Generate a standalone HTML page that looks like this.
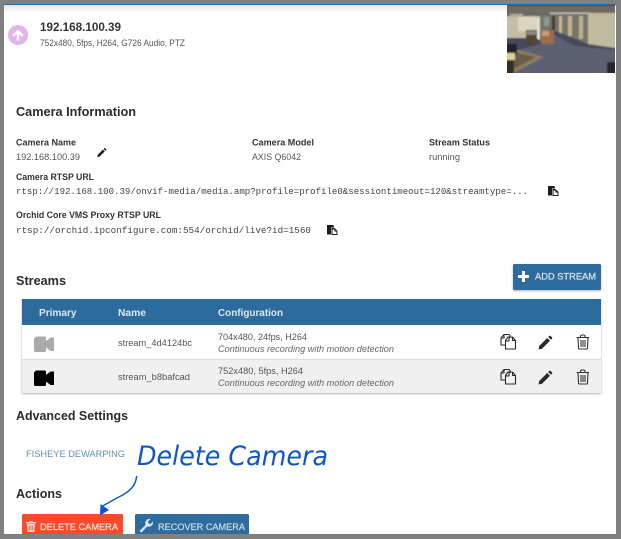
<!DOCTYPE html>
<html><head><meta charset="utf-8"><style>
html,body{margin:0;padding:0;background:#808080;width:621px;height:539px;overflow:hidden}
svg{display:block;position:absolute;left:0;top:0;filter:blur(.3px)}
text{font-family:"Liberation Sans",sans-serif;fill:#555;font-size:8.8px}
.b{font-weight:700;fill:#333}
.h{font-weight:700;fill:#2b2b2b;font-size:12.5px}
.m{font-family:"Liberation Mono",monospace;font-size:8.8px;fill:#444}
.w{fill:#fff;font-size:9.2px;stroke-width:.25px}
.i{font-style:italic;fill:#666}
</style></head><body>
<svg width="621" height="539" viewBox="0 0 621 539" xmlns="http://www.w3.org/2000/svg">
<defs>
<linearGradient id="tg" x1="0" y1="0" x2="0" y2="1"><stop offset="0" stop-color="#e4e4e4"/><stop offset="1" stop-color="#fff"/></linearGradient>
<filter id="bl" x="-5%" y="-5%" width="110%" height="110%"><feGaussianBlur stdDeviation="0.9"/></filter>
<filter id="s" x="-2%" y="-5%" width="104%" height="115%"><feDropShadow dx="0" dy="1" stdDeviation="1" flood-color="#000" flood-opacity=".3"/></filter>
<clipPath id="th"><rect x="507" y="5" width="108" height="68"/></clipPath>
</defs>
<rect x="0" y="0" width="621" height="539" fill="#fff"/>
<rect x="4" y="5" width="612" height="8" fill="url(#tg)"/>

<circle cx="18" cy="35" r="10" fill="#e2b6ec"/>
<path d="M18 29.500l-5.600 5.600 1.600 1.600 2.800-2.800v6.600h2.400v-6.600l2.800 2.800 1.600-1.600z" fill="#fff"/>
<text x="40" y="31" class="b" style="font-size:12px" textLength="81" lengthAdjust="spacingAndGlyphs">192.168.100.39</text>
<text x="40" y="46" textLength="145" lengthAdjust="spacingAndGlyphs">752x480, 5fps, H264, G726 Audio, PTZ</text>

<g clip-path="url(#th)"><g filter="url(#bl)">
<rect x="505" y="3" width="112" height="72" fill="#5d6172"/>
<rect x="505" y="3" width="112" height="11" fill="#6f6a5e"/>
<rect x="505" y="3" width="112" height="3" fill="#4c4a44"/>
<rect x="510" y="14" width="13" height="1.500" fill="#bdb8a6"/>
<rect x="550" y="12.500" width="40" height="1.500" fill="#c8c4b4"/>
<path d="M505 16H540V44H505z" fill="#c4bea6"/>
<rect x="518" y="17" width="18" height="14" fill="#dcd6bf"/>
<rect x="536.500" y="18" width="3" height="26" fill="#e6e4da"/>
<path d="M540 15H589V45L570 38 555 32 540 32z" fill="#767468"/>
<rect x="544" y="17" width="5" height="9" fill="#8d9a98"/>
<rect x="552" y="16" width="3" height="14" fill="#39393a"/>
<rect x="559" y="16" width="3" height="17" fill="#c4b999"/>
<rect x="568" y="16" width="4" height="20" fill="#c2b48e"/>
<rect x="579" y="16" width="4" height="23" fill="#bdb18f"/>
<path d="M588 13H617V48L588 45z" fill="#c2ba9f"/>
<path d="M547 28 566 35 588 44 615 48V50L575 46 556 36z" fill="#474a5c"/>
<path d="M505 38H536L545 43 518 50 505 50z" fill="#45485a"/>
<path d="M505 50H520L544 57 513 73H505z" fill="#8d7e60"/>
<path d="M517 53 536 57 514 69 510 62z" fill="#6a5c46"/>
<rect x="505" y="44" width="12" height="11" fill="#20222c"/>
<rect x="505" y="53" width="10" height="7" fill="#d9d09a"/>
<rect x="505" y="60" width="9" height="15" fill="#352f26"/>
<rect x="526" y="30" width="11" height="15" fill="#4f4436"/>
<rect x="527" y="31" width="9" height="4" fill="#8e8a78"/>
<rect x="541" y="30" width="13" height="14" fill="#9e6c48"/><rect x="542" y="31" width="7" height="5" fill="#c99a78"/>
<rect x="607" y="62" width="9" height="12" fill="#25272c"/>
</g></g>

<text x="16" y="116" class="h" textLength="120" lengthAdjust="spacingAndGlyphs">Camera Information</text>
<text x="16" y="145.500" class="b" textLength="60" lengthAdjust="spacingAndGlyphs">Camera Name</text>
<text x="16" y="160" textLength="64" lengthAdjust="spacingAndGlyphs">192.168.100.39</text>
<path d="M97.300 157l.4-2.300 5.200-5.200 1.900 1.900-5.200 5.200zM103.500 148.900l.8-.7a.6.6 0 0 1 .8 0l1.100 1.100a.6.6 0 0 1 0 .8l-.8.8z" fill="#222"/>
<text x="252" y="145.500" class="b" textLength="62" lengthAdjust="spacingAndGlyphs">Camera Model</text>
<text x="252" y="160" textLength="49" lengthAdjust="spacingAndGlyphs">AXIS Q6042</text>
<text x="429" y="145.500" class="b" textLength="61" lengthAdjust="spacingAndGlyphs">Stream Status</text>
<text x="429" y="160" textLength="31" lengthAdjust="spacingAndGlyphs">running</text>

<text x="16" y="180" class="b" textLength="78" lengthAdjust="spacingAndGlyphs">Camera RTSP URL</text>
<text x="16" y="194" class="m" textLength="512" lengthAdjust="spacingAndGlyphs">rtsp://192.168.100.39/onvif-media/media.amp?profile=profile0&amp;sessiontimeout=120&amp;streamtype=...</text>
<g id="cp"><path d="M548 186h6.500l.5 2.500h-3v7h-4z" fill="#1c1c1c"/><path d="M552.500 189h3l3 3v4h-6z" fill="#1c1c1c"/><path d="M553.500 190.500v4.500h4v-2.500h-2v-2z" fill="#fff"/></g>
<text x="16" y="218" class="b" textLength="145" lengthAdjust="spacingAndGlyphs">Orchid Core VMS Proxy RTSP URL</text>
<text x="16" y="233" class="m" textLength="295" lengthAdjust="spacingAndGlyphs">rtsp://orchid.ipconfigure.com:554/orchid/live?id=1560</text>
<use href="#cp" x="-221" y="39"/>

<text x="16" y="285" class="h" textLength="50" lengthAdjust="spacingAndGlyphs">Streams</text>
<rect x="513" y="264" width="88" height="26" rx="1.500" fill="#2e6c9e" filter="url(#s)"/>
<path d="M522 271h3v4h4v3h-4v4h-3v-4h-4v-3h4z" fill="#fff"/>
<text x="535" y="279.500" class="w" style="fill:#d5e2ec;stroke:#d5e2ec" textLength="61" lengthAdjust="spacingAndGlyphs">ADD STREAM</text>

<rect x="22" y="299" width="579" height="94" fill="#fff" filter="url(#s)"/>
<rect x="22" y="299" width="579" height="26" fill="#2d6b9c"/>
<rect x="22" y="359" width="579" height="34" fill="#f0f0f0"/>
<rect x="22" y="359" width="579" height="1" fill="#dcdcdc"/>
<text x="39" y="316" class="b" style="fill:#dce7f0;font-size:10px" textLength="37.500" lengthAdjust="spacingAndGlyphs">Primary</text>
<text x="118" y="316" class="b" style="fill:#dce7f0;font-size:10px" textLength="28" lengthAdjust="spacingAndGlyphs">Name</text>
<text x="218" y="316" class="b" style="fill:#dce7f0;font-size:10px" textLength="65" lengthAdjust="spacingAndGlyphs">Configuration</text>

<path d="M35.500 336.500h9a1.500 1.500 0 0 1 1.500 1.500v3l4.500-3.500h3.500v13.500h-3.500l-4.500-3.500v3a1.500 1.500 0 0 1-1.500 1.500h-9a1.500 1.500 0 0 1-1.500-1.500v-11.500a1.500 1.500 0 0 1 1.500-1.500z" fill="#aaa"/>
<path d="M35.500 370.500h9a1.500 1.500 0 0 1 1.500 1.500v3l4.500-3.500h3.500v13.500h-3.500l-4.500-3.500v3a1.500 1.500 0 0 1-1.500 1.500h-9a1.500 1.500 0 0 1-1.500-1.500v-11.500a1.500 1.500 0 0 1 1.500-1.500z" fill="#000"/>
<text x="118" y="346" textLength="74" lengthAdjust="spacingAndGlyphs">stream_4d4124bc</text>
<text x="118" y="380" textLength="72" lengthAdjust="spacingAndGlyphs">stream_b8bafcad</text>
<text x="218" y="340" textLength="89" lengthAdjust="spacingAndGlyphs">704x480, 24fps, H264</text>
<text x="218" y="352" class="i" textLength="176" lengthAdjust="spacingAndGlyphs">Continuous recording with motion detection</text>
<text x="218" y="374" textLength="85" lengthAdjust="spacingAndGlyphs">752x480, 5fps, H264</text>
<text x="218" y="386" class="i" textLength="176" lengthAdjust="spacingAndGlyphs">Continuous recording with motion detection</text>

<g id="ic">
<g fill="none" stroke="#2a2a2a" stroke-width="1.100" stroke-linejoin="round"><path d="M505.500 345h-4.500v-7l3-3.500h5l1 1v2.500"/><path d="M504 334.500v3.500h-3"/><path d="M505.500 349h10v-8.500l-3-3.500h-4.500l-2.500 3.500z"/><path d="M509 337.500v3.500h-3.500M512.500 337v3.500h3"/></g>
<path d="M538.500 349.500l.7-3.500 8-8 2.800 2.800-8 8zM548.200 337l1-1a1 1 0 0 1 1.400 0l1.400 1.400a1 1 0 0 1 0 1.400l-1 1z" fill="#2a2a2a"/>
<g fill="none" stroke="#333" stroke-width="1.100"><path d="M576.500 337.500h12.500M580.500 337.500v-1.500l1-1h2.500l1 1v1.500M578 337.500l.5 10.500a1 1 0 0 0 1 1h7a1 1 0 0 0 1-1l.5-10.500M581 340v7M583 340v7M585 340v7"/></g>
</g>
<use href="#ic" y="35"/>

<text x="16" y="420" class="h" textLength="112" lengthAdjust="spacingAndGlyphs">Advanced Settings</text>
<text x="26" y="457" style="fill:#5f8db5;font-size:9.200px" textLength="99" lengthAdjust="spacingAndGlyphs">FISHEYE DEWARPING</text>
<text x="137" y="465" style="font-family:'DejaVu Sans',sans-serif;font-style:italic;font-size:27px;fill:#1155cc" textLength="191" lengthAdjust="spacingAndGlyphs">Delete Camera</text>
<text x="16" y="498" class="h" textLength="46" lengthAdjust="spacingAndGlyphs">Actions</text>

<rect x="22" y="514" width="101" height="26" rx="1.500" fill="#fb4a2b"/>
<rect x="135" y="514" width="114" height="26" rx="1.500" fill="#2e6c9e"/>
<path d="M26 522h3l.7-1h2.600l.7 1h3v1.500H26zM27 524h8l-.6 8h-6.800z" fill="#fbd5cc"/>
<path d="M29.300 525.500v5M31 525.500v5M32.700 525.500v5" stroke="#fb4a2b" stroke-width=".7"/>
<text x="40" y="530" class="w" style="fill:#fde0d9;stroke:#fde0d9" textLength="78" lengthAdjust="spacingAndGlyphs">DELETE CAMERA</text>
<path d="M139.500 531l6-6a4.500 4.500 0 0 1 5-6l-2.500 2.500.5 2 2 .5 2.500-2.500a4.500 4.500 0 0 1-6 5l-5.500 6z" fill="#dce7f0"/>
<text x="158" y="530" class="w" style="fill:#c7d8e6;stroke:#c7d8e6" textLength="87" lengthAdjust="spacingAndGlyphs">RECOVER CAMERA</text>
<path d="M136.700 476c-1 10-7 15-14 19-6 3-13 7-20 11" fill="none" stroke="#1155cc" stroke-width="1.500"/>
<path d="M100 515.500l.5-11.500 8.500 6z" fill="#1155cc"/>

<rect x="0" y="0" width="621" height="4.500" fill="#808080"/>
<rect x="4" y="4" width="612" height="1" fill="#2d6b9c"/>
<rect x="0" y="0" width="4" height="539" fill="#808080"/>
<rect x="616" y="0" width="5" height="539" fill="#808080"/>
<rect x="0" y="534" width="621" height="5" fill="#808080"/>
</svg>
</body></html>
